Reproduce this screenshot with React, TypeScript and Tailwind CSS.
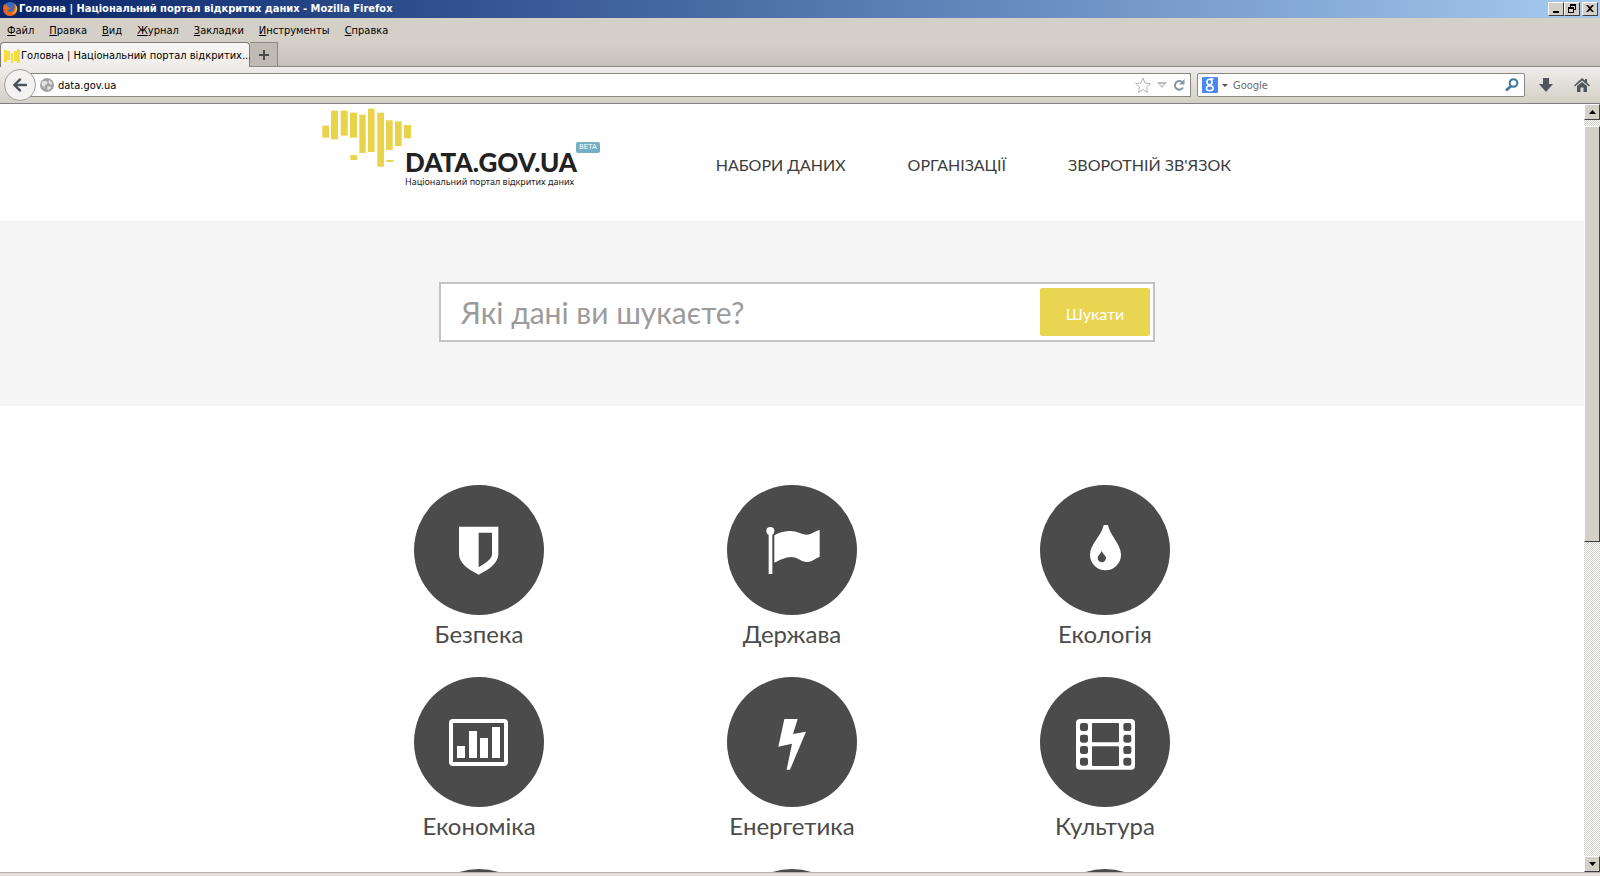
import type { ReactNode } from "react";
import { FaArrowLeft } from "react-icons/fa";

interface Category {
  name?: string;
  icon?: ReactNode;
}

const MENU = ["Файл", "Правка", "Вид", "Журнал", "Закладки", "Инструменты", "Справка"];

const NAV = ["НАБОРИ ДАНИХ", "ОРГАНІЗАЦІЇ", "ЗВОРОТНІЙ ЗВ'ЯЗОК"];

// x, y, width, height of every bar in the logo map
const MAP_BARS = [
  [1, 53, 20, 36], [27, 8, 21, 86], [56, 8, 21, 75], [84, 14, 21, 75],
  [112, 20, 19, 115], [138, 2, 20, 130], [166, 14, 20, 162], [192, 37, 20, 89],
  [219, 40, 20, 74], [246, 51, 21, 40], [85, 141, 20, 15], [193, 156, 21, 6],
];

const CHART_BARS = [[129, 207, 36], [165, 162, 81], [198, 183, 60], [234, 150, 93]];

const FILM_ROWS = [138, 173, 207, 242];

const CATEGORIES: Category[] = [
  {
    name: "Безпека",
    icon: (
      <path
        fillRule="evenodd"
        d="M135 125H253V208C253 233 226 254 194 269C162 254 135 233 135 208ZM194 143V247C218 233 234 221 234 208V143Z"
      />
    ),
  },
  {
    name: "Держава",
    icon: (
      <>
        <circle cx="130" cy="138" r="12" />
        <rect x="125" y="142" width="11" height="125" />
        <path d="M142 151C158 141 175 138 190 138C212 138 222 149 240 149C254 149 262 138 278 135V215C262 222 254 231 240 231C222 231 212 216 193 216C175 216 158 226 142 233Z" />
      </>
    ),
  },
  {
    name: "Екологія",
    icon: (
      <path
        fillRule="evenodd"
        d="M191 120H204C210 152 243 178 243 209A46 46 0 0 1 150 209C150 178 185 152 191 120ZM185 197C183 206 173 211 173 219A12 12 0 0 0 198 219C198 211 187 206 185 197Z"
      />
    ),
  },
  {
    name: "Економіка",
    icon: (
      <>
        <rect x="111" y="132" width="165" height="129" rx="6" fill="none" stroke="currentColor" strokeWidth="12" />
        {CHART_BARS.map(([x, y, h]) => (
          <rect key={x} x={x} y={y} width="24" height={h} />
        ))}
      </>
    ),
  },
  {
    name: "Енергетика",
    icon: <path d="M172 126H212L198 171L237 164L189 278H179L195 200L154 209Z" />,
  },
  {
    name: "Культура",
    icon: (
      <>
        <rect x="108" y="126" width="177" height="152" rx="12" />
        <g className="fill-[#4b4b4b]">
          {FILM_ROWS.map((y) => (
            <g key={y}>
              <rect x="120" y={y} width="24" height="24" rx="7" />
              <rect x="250" y={y} width="24" height="24" rx="7" />
            </g>
          ))}
          <rect x="156" y="138" width="81" height="58" rx="3" />
          <rect x="156" y="208" width="81" height="59" rx="3" />
        </g>
      </>
    ),
  },
  {},
  {},
  {},
];

export default function App() {
  return (
    <div className="flex h-screen flex-col overflow-hidden bg-[#d4d0c8] font-['DejaVu_Sans_Condensed','DejaVu_Sans',sans-serif] text-[11px] text-black">
      <TitleBar />
      <MenuBar />
      <TabStrip />
      <Toolbar />
      <div className="flex min-h-0 flex-1 border-t border-[#808080] bg-white">
        <Page />
        <Scrollbar />
      </div>
      <div className="h-1 shrink-0 border-t border-[#b5afa5] bg-[#e4dfd8]" />
    </div>
  );
}

function TitleBar() {
  return (
    <div className="flex h-[18px] shrink-0 items-center bg-linear-to-r from-[#0a246a] to-[#a6caf0] pr-[2px] pl-[2px]">
      <svg viewBox="0 0 16 16" className="size-4">
        <circle cx="8" cy="8" r="7" fill="#2f6fc0" />
        <path d="M2 3C0 8 2 15 8 15C13 15 16 11 15 6C14 4 13 3 12 2C13 5 12 6 12 8C11 11 7 12 5 9C7 9 8 8 9 7C7 7 6 6 6 5C4 4 3 4 2 3Z" fill="#e8641b" />
        <path d="M13 3C15 7 13 12 9 13C13 13 16 10 15 6Z" fill="#f8c440" />
      </svg>
      <h1 className="ml-px flex-1 truncate text-[11px] font-bold text-white">
        Головна | Національний портал відкритих даних - Mozilla Firefox
      </h1>
      <div className="flex">
        <WindowButton label="Minimize">
          <rect x="3" y="8" width="6" height="2" />
        </WindowButton>
        <WindowButton label="Restore">
          <path fillRule="evenodd" d="M4 1H10V7H8V10H2V4H4ZM5 3V4H8V6H9V3ZM3 6V9H7V6Z" />
        </WindowButton>
        <span className="w-[2px]" />
        <WindowButton label="Close">
          <path d="M2 2H4L6 4L8 2H10L7 5.500L10 9H8L6 7L4 9H2L5 5.500Z" />
        </WindowButton>
      </div>
    </div>
  );
}

function WindowButton({ label, children }: { label: string; children: ReactNode }) {
  return (
    <button
      aria-label={label}
      className="flex h-[14px] w-4 items-center justify-center border border-t-white border-r-[#404040] border-b-[#404040] border-l-white bg-[#d4d0c8]"
    >
      <svg viewBox="0 0 12 12" className="size-3">{children}</svg>
    </button>
  );
}

function MenuBar() {
  return (
    <nav className="flex h-6 shrink-0 items-center gap-[15px] pt-[2px] pl-[7px]">
      {MENU.map((item) => (
        <button key={item}>
          <u>{item[0]}</u>
          {item.slice(1)}
        </button>
      ))}
    </nav>
  );
}

function TabStrip() {
  return (
    <div className="flex h-[25px] shrink-0 border-b border-[#8c8982] bg-linear-to-b from-[#d4d0c8] to-[#c6c2bb]">
      <button className="-mb-px flex w-[250px] items-center rounded-t-sm border border-b-0 border-[#7f7c76] bg-linear-to-b from-[#f8f7f5] to-[#efedea] pt-[2px] pl-[3px]">
        <svg viewBox="0 0 16 16" className="mr-px size-4 shrink-0 fill-[#f7dd3c]">
          <path d="M0 2H3V14H0ZM3 3H6V12H3ZM7 5H9V15H7ZM10 3H13V13H10ZM13 1H16V15H13Z" />
        </svg>
        <span className="whitespace-nowrap">Головна | Національний портал відкритих...</span>
      </button>
      <button aria-label="New tab" className="flex w-7 items-center justify-center border border-b-0 border-l-0 border-[#8c8982] bg-[#bfbbb4]">
        <svg viewBox="0 0 10 10" className="size-[10px] fill-[#4a4a4a]">
          <path d="M4 0H6V4H10V6H6V10H4V6H0V4H4Z" />
        </svg>
      </button>
    </div>
  );
}

function Toolbar() {
  return (
    <div className="flex h-9 shrink-0 items-center bg-linear-to-b from-[#efedea] to-[#d4d0c8] pl-1">
      <button aria-label="Back" className="z-10 flex size-8 shrink-0 items-center justify-center rounded-full border border-[#a19e98] bg-[#f3f2f0]">
        <FaArrowLeft className="size-4 text-[#4a535b]" />
      </button>
      <div className="-ml-2 flex h-6 flex-1 items-center border border-[#8a8781] bg-white pr-[5px] pl-[11px]">
        <svg viewBox="0 0 16 16" className="size-[14px] shrink-0">
          <circle cx="8" cy="8" r="8" fill="#a3a3a3" />
          <path d="M2 4L7 3L9 6L6 8L5 11L2 8ZM10 2L14 5L13 8L10 6ZM9 9L13 10L10 14L8 12Z" fill="#e2e2e2" />
        </svg>
        <input aria-label="Address" defaultValue="data.gov.ua" className="ml-1 min-w-0 flex-1 pt-[2px] outline-none" />
        <div className="flex items-center gap-[6px]">
          <button aria-label="Bookmark">
            <svg viewBox="0 0 16 16" className="size-4 fill-none stroke-[#b4b4b4]">
              <path d="M8 1L10 6L15.500 6.500L11.500 10L12.500 15.500L8 12.500L3.500 15.500L4.500 10L0.500 6.500L6 6Z" />
            </svg>
          </button>
          <button aria-label="History">
            <svg viewBox="0 0 10 7" className="h-[7px] w-[10px]">
              <path d="M0 0H10L5 6Z" fill="#b9bcc0" />
              <path d="M3 2H7L5 4Z" fill="#fff" />
            </svg>
          </button>
          <button aria-label="Reload">
            <svg viewBox="0 0 12 12" className="size-3">
              <path d="M9 3A4.300 4.300 0 1 0 10 8.500" fill="none" stroke="#8794a3" strokeWidth="2" />
              <path d="M11.500 0V5.500H6Z" fill="#8794a3" />
            </svg>
          </button>
        </div>
      </div>
      <div className="ml-[6px] flex h-6 w-[328px] items-center rounded-xs border border-[#8a8781] bg-white pr-[5px] pl-1">
        <button aria-label="Search engine" className="flex items-center gap-1">
          <svg viewBox="0 0 16 16" className="size-4">
            <rect width="16" height="16" rx="1" fill="#4a87ee" />
            <g fill="none" stroke="#fff">
              <ellipse cx="7.500" cy="5" rx="2.500" ry="2.700" strokeWidth="1.600" />
              <ellipse cx="7.800" cy="11.300" rx="3.300" ry="2.500" strokeWidth="1.600" />
              <path d="M8 2H11.500M8 7.500L9 9" strokeWidth="1.300" />
            </g>
          </svg>
          <svg viewBox="0 0 6 3" className="h-[3px] w-[6px] fill-[#555]">
            <path d="M0 0H6L3 3Z" />
          </svg>
        </button>
        <input aria-label="Search" placeholder="Google" className="ml-[5px] min-w-0 flex-1 pt-[2px] outline-none placeholder:text-[#6b6b6b]" />
        <button aria-label="Find">
          <svg viewBox="0 0 14 14" className="size-[14px] fill-none stroke-[#41769f]">
            <circle cx="8.500" cy="5" r="3.800" strokeWidth="2" />
            <path d="M6 8L1 12.500" strokeWidth="2.600" />
          </svg>
        </button>
      </div>
      <button aria-label="Downloads" className="flex w-[42px] justify-center">
        <svg viewBox="0 0 14 14" className="size-[14px] fill-[#4f565d]">
          <path d="M4 0H10V6H14L7 14L0 6H4Z" />
        </svg>
      </button>
      <button aria-label="Home" className="flex w-[33px] justify-center pr-1">
        <svg viewBox="0 0 16 14" className="h-[14px] w-4 fill-[#4f565d]">
          <path d="M8 0L11 2.500V1H13V4.500L16 7.500L15 8.500L8 2.500L1 8.500L0 7.500Z" />
          <path d="M3 8L8 4L13 8V14H9.500V9.500H6.500V14H3Z" />
        </svg>
      </button>
    </div>
  );
}

function Logo() {
  return (
    <a href="#" aria-label="data.gov.ua" className="relative flex text-[#222]">
      <svg viewBox="0 0 270 180" className="h-[60px] w-[90px] shrink-0 fill-[#e9d34b]">
        {MAP_BARS.map(([x, y, w, h]) => (
          <rect key={`${x}-${y}`} x={x} y={y} width={w} height={h} />
        ))}
      </svg>
      <span className="-ml-[7px] flex flex-col pt-10 whitespace-nowrap">
        <span className="font-[Lato,sans-serif] text-[26px] leading-7 font-black">DATA.GOV.UA</span>
        <span className="font-['Noto_Sans',sans-serif] text-[9px] leading-3">Національний портал відкритих даних</span>
      </span>
      <span className="absolute top-[34px] left-[254px] rounded-xs bg-[#74afc4] px-[3px] font-['DejaVu_Sans',sans-serif] text-[7px] leading-[11px] text-white">
        BETA
      </span>
    </a>
  );
}

function Page() {
  return (
    <div className="min-w-0 flex-1 overflow-hidden bg-white font-[Lato,'Noto_Sans',sans-serif]">
      <header className="mx-auto flex h-[117px] max-w-[940px] items-start pt-1">
        <Logo />
        <nav className="ml-auto flex gap-[62px] pt-[45px] pr-[31px] text-base text-[#3c3c3c]">
          {NAV.map((item) => (
            <a key={item} href="#" className="whitespace-nowrap">{item}</a>
          ))}
        </nav>
      </header>

      <section className="bg-[#f5f5f5] pt-[61px] pb-16 pl-[10px]">
        <form className="mx-auto flex h-[60px] w-[716px] max-w-full items-center border-2 border-[#c3c3c3] bg-white p-[3px] pl-5">
          <input
            aria-label="Які дані ви шукаєте?"
            placeholder="Які дані ви шукаєте?"
            className="min-w-0 flex-1 text-[30px] outline-none placeholder:text-[#9b9b9b]"
          />
          <button type="button" className="h-12 w-[110px] rounded-xs bg-[#ead552] pt-1 text-base text-white">
            Шукати
          </button>
        </form>
      </section>

      <ul className="mx-auto grid max-w-[939px] grid-cols-3 pt-[79px]">
        {CATEGORIES.map((category, i) => (
          <li key={i} className="h-48">
            <a href="#" className="flex flex-col items-center text-[#4b4b4b]">
              <svg viewBox="0 0 390 390" className="size-[130px] rounded-full bg-[#4b4b4b] fill-white text-white">
                {category.icon}
              </svg>
              {category.name && <span className="text-2xl leading-[38px]">{category.name}</span>}
            </a>
          </li>
        ))}
      </ul>
    </div>
  );
}

function Scrollbar() {
  return (
    <div className="flex w-4 shrink-0 flex-col bg-[repeating-conic-gradient(#ffffff_0_25%,#d4d0c8_0_50%)] bg-[length:2px_2px]">
      <button aria-label="Scroll up" className="flex h-4 items-center justify-center border border-t-white border-r-[#404040] border-b-[#404040] border-l-white bg-[#d4d0c8]">
        <svg viewBox="0 0 7 4" className="h-1 w-[7px]"><path d="M0 4L3.500 0L7 4Z" /></svg>
      </button>
      <div className="flex-1 pt-[6px]">
        <div className="h-[57%] border border-t-white border-r-[#404040] border-b-[#404040] border-l-white bg-[#d4d0c8]" />
      </div>
      <button aria-label="Scroll down" className="flex h-4 items-center justify-center border border-t-white border-r-[#404040] border-b-[#404040] border-l-white bg-[#d4d0c8]">
        <svg viewBox="0 0 7 4" className="h-1 w-[7px]"><path d="M0 0H7L3.500 4Z" /></svg>
      </button>
    </div>
  );
}
